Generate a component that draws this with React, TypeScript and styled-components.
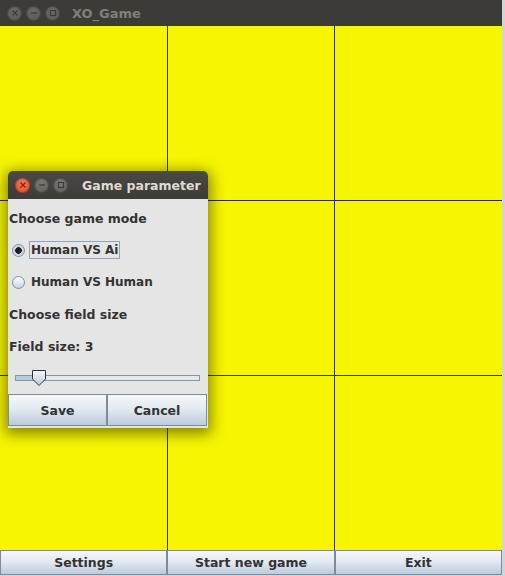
import React, { useState } from 'react';
import styled, { createGlobalStyle } from 'styled-components';

const GlobalStyle = createGlobalStyle`
  html, body {
    margin: 0;
    padding: 0;
    background: #d4d4d4;
  }
  body {
    width: 505px;
    height: 576px;
    overflow: hidden;
    font-family: "DejaVu Sans", "Liberation Sans", sans-serif;
  }
`;

const Frame = styled.div`
  position: relative;
  width: 502px;
  height: 575px;
  display: flex;
  flex-direction: column;
  background: #ebebeb;
`;

const TitleBar = styled.div<{ $active?: boolean }>`
  height: ${(p) => (p.$active ? 28 : 26)}px;
  flex: none;
  display: flex;
  align-items: center;
  padding-left: 7px;
  background: ${(p) => (p.$active ? 'linear-gradient(#4a4945, #3c3b37)' : '#3c3b37')};
  border-radius: ${(p) => (p.$active ? '5px 5px 0 0' : '0')};
`;

const WinButtons = styled.div`
  display: flex;
  gap: 4px;
`;

const WinButton = styled.div<{ $close?: boolean; $dim?: boolean }>`
  width: 15px;
  height: 15px;
  flex: none;
  border-radius: 50%;
  display: flex;
  align-items: center;
  justify-content: center;
  background: ${(p) =>
    p.$close
      ? 'radial-gradient(circle at 50% 35%, #f27a52, #e0481e)'
      : p.$dim
      ? 'radial-gradient(circle at 50% 35%, #6a6965, #575652)'
      : 'radial-gradient(circle at 50% 35%, #7a7973, #5b5a55)'};
  box-shadow: inset 0 0 0 1px rgba(0, 0, 0, 0.25);
`;

const Title = styled.span<{ $active?: boolean }>`
  margin-left: ${(p) => (p.$active ? 14 : 12)}px;
  font-weight: bold;
  font-size: ${(p) => (p.$active ? 12.5 : 13)}px;
  color: ${(p) => (p.$active ? '#dfdbd2' : '#807f7a')};
  white-space: nowrap;
`;

const Board = styled.div`
  flex: 1;
  display: grid;
  grid-template-columns: repeat(3, 1fr);
  grid-template-rows: repeat(3, 1fr);
  gap: 1px;
  background: #2c2c2c;
`;

const Cell = styled.div`
  background: #f6f600;
`;

const ButtonBar = styled.div`
  height: 25px;
  flex: none;
  display: grid;
  grid-template-columns: repeat(3, 1fr);
`;

const JButton = styled.button`
  margin: 0;
  padding: 0;
  border: 1px solid #7d8c9d;
  background: linear-gradient(#f5f7fa 0%, #e4eaf1 45%, #bccbdc 100%);
  font-family: "DejaVu Sans", "Liberation Sans", sans-serif;
  font-weight: bold;
  font-size: 12.5px;
  color: #333333;
  cursor: pointer;
`;

const Dialog = styled.div`
  position: absolute;
  left: 8px;
  top: 171px;
  width: 200px;
  display: flex;
  flex-direction: column;
  background: #e5e5e5;
  border-radius: 5px 5px 0 0;
  box-shadow: 0 3px 14px 3px rgba(40, 40, 0, 0.55);
`;

const DialogBody = styled.div`
  padding-top: 3px;
  display: flex;
  flex-direction: column;
`;

const Row = styled.div`
  height: 32px;
  display: flex;
  align-items: center;
  padding-left: 1px;
  font-weight: bold;
  font-size: 12.5px;
  color: #333333;
  white-space: nowrap;
`;

const RadioRow = styled(Row)`
  padding-left: 4px;
  gap: 4px;
  font-size: 12px;
  cursor: pointer;
`;

const Radio = styled.span<{ $checked?: boolean }>`
  width: 11px;
  height: 11px;
  border-radius: 50%;
  border: 1px solid #7f8fa1;
  background: ${(p) =>
    p.$checked ? 'radial-gradient(circle, #1f1f1f 0 3px, #c4cfdb 3.6px, #eef2f6)' : 'linear-gradient(#ffffff, #c5d3e1)'};
  flex: none;
`;

const RadioLabel = styled.span<{ $focused?: boolean }>`
  padding: 1px 1px;
  border: 1px solid ${(p) => (p.$focused ? '#93a4b6' : 'transparent')};
`;

const SliderRow = styled.div`
  height: 32px;
  display: flex;
  align-items: center;
  padding-left: 7px;
`;

const Track = styled.div`
  position: relative;
  width: 183px;
  height: 4px;
  border: 1px solid #8797a8;
  background: linear-gradient(to right, #b6cbdf 0 16px, #e6e8ea 16px);
`;

const Thumb = styled.svg`
  position: absolute;
  left: 15px;
  top: -6px;
`;

const DialogButtons = styled.div`
  display: grid;
  grid-template-columns: 99px 100px;
  height: 32px;
  margin-bottom: 2px;
`;

const WinGlyph: React.FC<{ kind: 'close' | 'min' | 'max'; color: string }> = ({ kind, color }) => (
  <svg width="8" height="8" viewBox="0 0 8 8">
    {kind === 'close' && <path d="M1.5 1.5 L6.5 6.5 M6.5 1.5 L1.5 6.5" stroke={color} strokeWidth="1.2" />}
    {kind === 'min' && <path d="M1 4 H7" stroke={color} strokeWidth="1.2" />}
    {kind === 'max' && <rect x="1.5" y="1.5" width="5" height="5" fill="none" stroke={color} strokeWidth="1.1" />}
  </svg>
);

const App: React.FC = () => {
  const [mode, setMode] = useState<'ai' | 'human'>('ai');
  const cells = Array.from({ length: 9 });

  return (
    <>
      <GlobalStyle />
      <Frame>
        <TitleBar>
          <WinButtons>
            <WinButton $dim>
              <WinGlyph kind="close" color="#3a3935" />
            </WinButton>
            <WinButton $dim>
              <WinGlyph kind="min" color="#3a3935" />
            </WinButton>
            <WinButton $dim>
              <WinGlyph kind="max" color="#3a3935" />
            </WinButton>
          </WinButtons>
          <Title>XO_Game</Title>
        </TitleBar>
        <Board>
          {cells.map((_, i) => (
            <Cell key={i} />
          ))}
        </Board>
        <ButtonBar>
          <JButton>Settings</JButton>
          <JButton>Start new game</JButton>
          <JButton>Exit</JButton>
        </ButtonBar>

        <Dialog>
          <TitleBar $active>
            <WinButtons>
              <WinButton $close>
                <WinGlyph kind="close" color="#7a2810" />
              </WinButton>
              <WinButton>
                <WinGlyph kind="min" color="#3a3935" />
              </WinButton>
              <WinButton>
                <WinGlyph kind="max" color="#3a3935" />
              </WinButton>
            </WinButtons>
            <Title $active>Game parameter</Title>
          </TitleBar>
          <DialogBody>
            <Row>Choose game mode</Row>
            <RadioRow onClick={() => setMode('ai')}>
              <Radio $checked={mode === 'ai'} />
              <RadioLabel $focused>Human VS Ai</RadioLabel>
            </RadioRow>
            <RadioRow onClick={() => setMode('human')}>
              <Radio $checked={mode === 'human'} />
              <RadioLabel>Human VS Human</RadioLabel>
            </RadioRow>
            <Row>Choose field size</Row>
            <Row>Field size: 3</Row>
            <SliderRow>
              <Track>
                <Thumb width="16" height="17" viewBox="0 0 16 17">
                  <defs>
                    <linearGradient id="thumbFill" x1="0" y1="0" x2="0" y2="1">
                      <stop offset="0" stopColor="#f6f8fa" />
                      <stop offset="1" stopColor="#bccbdb" />
                    </linearGradient>
                  </defs>
                  <path d="M1.5 0.5 H14.5 V9 L8 15.5 L1.5 9 Z" fill="url(#thumbFill)" stroke="#2e3238" strokeWidth="1" />
                </Thumb>
              </Track>
            </SliderRow>
            <DialogButtons>
              <JButton>Save</JButton>
              <JButton>Cancel</JButton>
            </DialogButtons>
          </DialogBody>
        </Dialog>
      </Frame>
    </>
  );
};

export default App;
